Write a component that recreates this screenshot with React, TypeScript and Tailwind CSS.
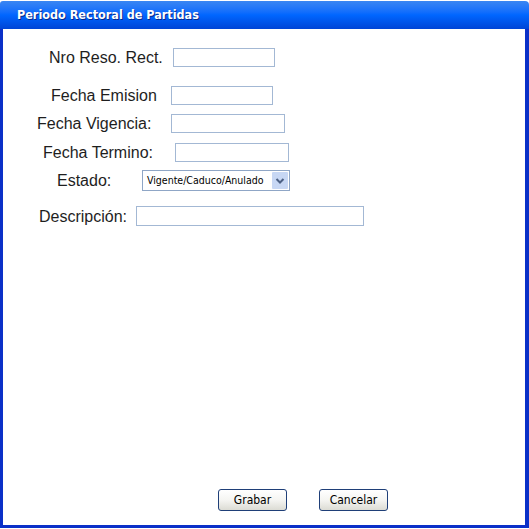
const labelFont = "font-['Liberation_Sans',Arial,sans-serif] text-[16px] text-[#1e1e1e]";
const tahoma = "font-['DejaVu_Sans_Condensed','DejaVu_Sans',Tahoma,sans-serif]";

type Field = {
  label: string;
  top: string;
  labelBox: string;
  input: string;
};

const fields: Field[] = [
  { label: "Nro Reso. Rect.", top: "mt-[19px]", labelBox: "w-[170px] pl-[46px]", input: "w-[102px] h-[19px]" },
  { label: "Fecha Emision", top: "mt-[19px]", labelBox: "w-[168px] pl-[48px]", input: "w-[102px] h-[19px]" },
  { label: "Fecha Vigencia:", top: "mt-[9px]", labelBox: "w-[168px] pl-[34px]", input: "w-[114px] h-[19px]" },
  { label: "Fecha Termino:", top: "mt-[10px]", labelBox: "w-[172px] pl-[40px]", input: "w-[114px] h-[19px]" },
];

function Chevron() {
  return (
    <svg width="16" height="17" viewBox="0 0 16 17" className="shrink-0">
      <rect x="0" y="0" width="16" height="17" rx="1" fill="#c7d7f4" />
      <path d="M4.5 7 L8 10.5 L11.5 7" fill="none" stroke="#4d6185" strokeWidth="2" />
    </svg>
  );
}

export default function App() {
  return (
    <div className="w-[529px] h-[529px] bg-white">
      <div className="w-[529px] h-[528px] flex flex-col">
        <div className="mt-[1px] h-[28px] rounded-tl-[3px] rounded-tr-[4px] bg-gradient-to-b from-[#3a86f2] via-[#0066ff] to-[#0044d6] flex items-center pl-[17px] pt-[1px]">
          <span
            className={`${tahoma} text-[12.5px] font-semibold text-white [text-shadow:1px_1px_0_#0a2a8a]`}
          >
            Periodo Rectoral de Partidas
          </span>
        </div>
        <div className="flex-1 border-l-[3px] border-r-[4px] border-b-[3px] border-[#0a30c8] flex flex-col">
          {fields.map((f) => (
            <div key={f.label} className={`flex items-center ${f.top}`}>
              <div className={`${f.labelBox} ${labelFont} leading-none pt-[1px]`}>{f.label}</div>
              <div className={`${f.input} border border-[#a3b8d4] bg-white`} />
            </div>
          ))}

          <div className="flex items-center mt-[8px]">
            <div className={`w-[139px] pl-[54px] ${labelFont} leading-none pt-[1px]`}>Estado:</div>
            <div className="w-[148px] h-[21px] border border-[#8fa6c6] bg-white flex items-center justify-between pl-[4px] pr-[1px]">
              <span className={`${tahoma} text-[10.5px] text-black leading-none whitespace-nowrap`}>Vigente/Caduco/Anulado</span>
              <Chevron />
            </div>
          </div>

          <div className="flex items-center mt-[15px]">
            <div className={`w-[133px] pl-[36px] ${labelFont} leading-none pt-[1px]`}>Descripción:</div>
            <div className="w-[228px] h-[20px] border border-[#a3b8d4] bg-white" />
          </div>

          <div className="flex mt-[263px] pl-[215px] gap-[32px]">
            <button className={`w-[69px] h-[22px] rounded-[3px] border border-[#1f3f78] bg-gradient-to-b from-white via-[#f5f5f2] to-[#dcdcd4] ${tahoma} text-[12px] text-black`}>
              Grabar
            </button>
            <button className={`w-[69px] h-[22px] rounded-[3px] border border-[#1f3f78] bg-gradient-to-b from-white via-[#f5f5f2] to-[#dcdcd4] ${tahoma} text-[12px] text-black`}>
              Cancelar
            </button>
          </div>
        </div>
      </div>
    </div>
  );
}
